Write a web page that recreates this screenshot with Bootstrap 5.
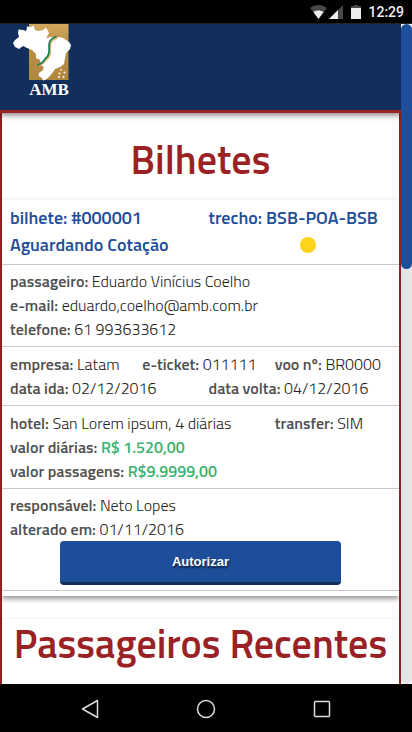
<!DOCTYPE html>
<html lang="pt-BR">
<head>
<meta charset="utf-8">
<meta name="viewport" content="width=device-width, initial-scale=1">
<title>AMB - Bilhetes</title>
<link rel="stylesheet" href="https://cdn.jsdelivr.net/npm/bootstrap@5.3.0/dist/css/bootstrap.min.css">
<style>
body { font-family: "Titillium Web", Roboto, sans-serif; font-size: 16px; line-height: 24px; color: #222; }
.status-bar { height: 24px; background: #000; border-bottom: 1px solid #222; color: #eee; font: 500 14px/24px Roboto, sans-serif; padding-right: 8px; gap: 4px; }
.system-nav { height: 48px; background: #000; padding: 0 32px; }
.system-nav button { background: none; border: 0; padding: 0; width: 116px; }
.app-header { height: 89px; background: #122e5a; border-bottom: 3px solid #9a2224; box-shadow: 0 2px 6px rgba(0,0,0,.5); }
.brand { margin-left: 10px; }
.screen { border: solid #921f21; border-width: 0 2px; }
.scroll-track { width: 11px; background: #e5e5e5; border-radius: 6px; }
.scroll-thumb { height: 245px; background: #1e4e99; border-radius: 6px; }
.screen h1, .screen h2 { color: #9a2224; font-size: 40px; line-height: 50px; font-weight: 600; white-space: nowrap; }
.screen h1 { padding: 22px 0 14px; }
.ticket { border-top: 1px solid #f5f5f5; padding-bottom: 5px; box-shadow: 0 3px 5px rgba(0,0,0,.4); }
.ticket .row { --bs-gutter-x: 16px; margin: 0; padding: 5px 0; border-bottom: 1px solid #c8c8c8; white-space: nowrap; font-weight: 300; }
.ticket .heading { color: #1e4e99; font-size: 18px; line-height: 27px; font-weight: 600; padding: 4px 0 6px; }
.ticket .contact, .ticket .approval { padding: 4px 0 5px; }
.ticket b { font-weight: 600; color: #505050; }
.ticket b.amount { color: #3cb371; }
.state-dot { width: 16px; height: 16px; background: #ffd21c; }
.authorize { width: 71%; height: 44px; border: 0; border-bottom: 3px solid #122e5a; border-radius: 4px; background: #1e4e99; color: #fff; font: bold 13px/40px "Liberation Sans", sans-serif; padding: 0; text-shadow: 1px 2px 2px rgba(0,0,0,.6); }
.recent { margin-top: 22px; border-top: 1px solid #f5f5f5; }
</style>
<script src="https://cdn.jsdelivr.net/npm/bootstrap@5.3.0/dist/js/bootstrap.bundle.min.js"></script>
</head>
<body>
<div class="d-flex flex-column vh-100 overflow-hidden">
  <div class="status-bar d-flex align-items-center justify-content-end flex-shrink-0">
    <svg width="58" height="24" viewBox="0 0 58 24" aria-hidden="true">
      <path d="M4 8C9 4 16 4 21 8L12.500 19Z" fill="#484848"/><path d="M7.500 12C10.500 10 14.500 10 17.500 12L12.500 19Z" fill="#eee"/>
      <path d="M37 5V19H23Z" fill="#484848"/><path d="M32 10V19H23Z" fill="#eee"/>
      <path d="M45 6H48V5H52V6H55V8H45Z" fill="#484848"/><path d="M45 8H55V19H45Z" fill="#eee"/>
    </svg>
    <span>12:29</span>
  </div>
  <div class="d-flex flex-fill overflow-hidden">
    <div class="d-flex flex-column flex-fill overflow-hidden">
      <header class="app-header flex-shrink-0 position-relative">
        <svg class="brand d-block" width="64" height="76" viewBox="10 24 64 76" role="img" aria-label="AMB">
          <defs>
            <linearGradient id="gold" x1="0" y1="0" x2="0" y2="1"><stop offset="0" stop-color="#d1a65c"/><stop offset=".3" stop-color="#bd9148"/><stop offset="1" stop-color="#b0873f"/></linearGradient>
            <pattern id="rays" width="4" height="3" patternUnits="userSpaceOnUse"><path d="M0 3L4 0" stroke="#e8c77f" stroke-width=".5" opacity=".5"/></pattern>
          </defs>
          <path d="M29 24H68.500V80H29Z" fill="url(#gold)"/><path d="M29 24H68.500V50H29Z" fill="url(#rays)"/>
          <path d="M18.500 29.500L23 30L26 31L27 28L26.500 26.500L31 27L33.500 25.500L35 30L38 31L43 30L46 27.500L48 31L49 33L46 38L51 37L54 38L59 37L63 38L69 42L71 45L70 49L66 53L65 58L64 64L60 67L55 69L53 72L49 77L45 80L43 80.500L42 78L38.500 76L39 73L43 70L43.500 67L41 65L40 60L36 58L36 54L32 50L27 48L23 46L19 49L15 47L13 43L15 40L19 37L18 33Z" fill="#fff"/>
          <path d="M57.500 37.500C43 43 56 52 46 60Q43 64 39 65.500" fill="none" stroke="#e7b86c" stroke-width="2"/>
          <path d="M56.500 36.500C42 42 55 51 45 59Q42 64 37.500 65" fill="none" stroke="#16825c" stroke-width="1.800"/>
          <path d="M61 69.800h.1M64.500 72.500h.1M59.500 73.500h.1M59 77h.1M63.500 77h.1" stroke="#fff" stroke-width="1.800" stroke-linecap="round"/>
          <text x="49" y="94.500" text-anchor="middle" fill="#fff" font-family="Liberation Serif, serif" font-weight="bold" font-size="17">AMB</text>
        </svg>
      </header>
      <main class="screen flex-fill overflow-hidden bg-white">
        <h1 class="text-center m-0">Bilhetes</h1>
        <article class="ticket">
          <div class="row heading">
            <div class="col-6">bilhete: #000001</div><div class="col-6">trecho: BSB-POA-BSB</div>
            <div class="col-9">Aguardando Cotação</div><div class="col-3 p-0 d-flex align-items-center"><span class="state-dot rounded-circle"></span></div>
          </div>
          <div class="row contact">
            <div class="col-12"><b>passageiro:</b> Eduardo Vinícius Coelho</div>
            <div class="col-12"><b>e-mail:</b> eduardo,coelho@amb.com.br</div>
            <div class="col-12"><b>telefone:</b> 61 993633612</div>
          </div>
          <div class="row">
            <div class="col-4"><b>empresa:</b> Latam</div><div class="col-4"><b>e-ticket:</b> 011111</div><div class="col-4"><b>voo nº:</b> BR0000</div>
            <div class="col-6"><b>data ida:</b> 02/12/2016</div><div class="col-6"><b>data volta:</b> 04/12/2016</div>
          </div>
          <div class="row">
            <div class="col-8"><b>hotel:</b> San Lorem ipsum, 4 diárias</div><div class="col-4"><b>transfer:</b> SIM</div>
            <div class="col-12"><b>valor diárias:</b> <b class="amount">R$ 1.520,00</b></div>
            <div class="col-12"><b>valor passagens:</b> <b class="amount">R$9.9999,00</b></div>
          </div>
          <div class="row approval">
            <div class="col-12"><b>responsável:</b> Neto Lopes</div>
            <div class="col-12"><b>alterado em:</b> 01/11/2016</div>
            <div class="col-12 p-0 text-center"><button type="button" class="authorize d-block mx-auto">Autorizar</button></div>
          </div>
        </article>
        <section class="recent"><h2 class="text-center m-0">Passageiros Recentes</h2></section>
      </main>
    </div>
    <div class="scroll-track flex-shrink-0"><div class="scroll-thumb"></div></div>
  </div>
  <nav class="system-nav d-flex align-items-center justify-content-center flex-shrink-0" aria-label="Sistema">
    <button type="button" aria-label="Voltar"><svg width="24" height="24" fill="none" stroke="#ddd" stroke-width="1.500" stroke-linejoin="round"><path d="M19.500 3.500V20.500L4.500 12Z"/></svg></button>
    <button type="button" aria-label="Início"><svg width="24" height="24" fill="none" stroke="#ddd" stroke-width="1.500"><circle cx="12" cy="12" r="8.500"/></svg></button>
    <button type="button" aria-label="Recentes"><svg width="24" height="24" fill="none" stroke="#ddd" stroke-width="1.500"><rect x="4.500" y="4.500" width="15" height="15" rx="1"/></svg></button>
  </nav>
</div>
</body>
</html>
